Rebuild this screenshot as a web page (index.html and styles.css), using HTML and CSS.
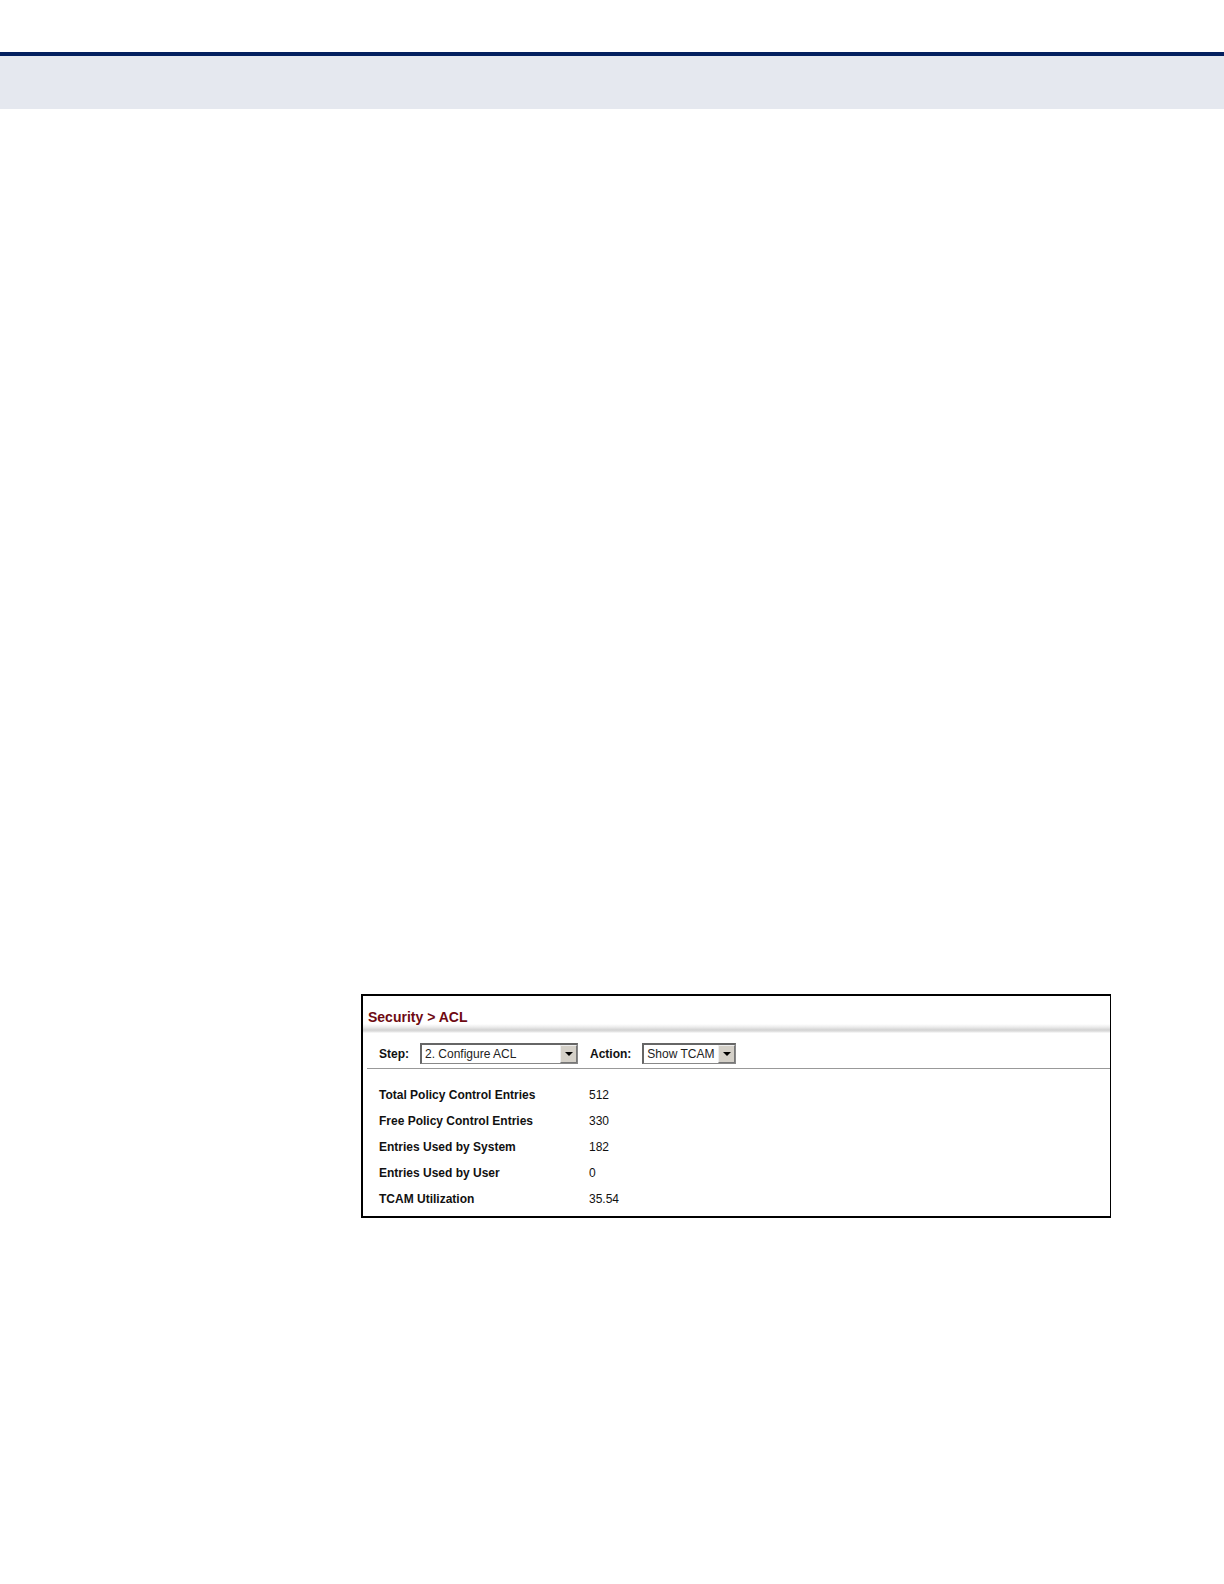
FILE: index.html
```html
<!DOCTYPE html>
<html lang="en">

<head>
    <meta charset="UTF-8">
    <meta name="viewport" content="width=device-width, initial-scale=1.0">
    <title>Security &gt; ACL</title>
    <link rel="stylesheet" href="styles.css">
</head>

<body>
    <header class="page-header"></header>

    <main class="page-content">
        <section class="panel">
            <h1 class="panel-title">Security &gt; ACL</h1>

            <form class="toolbar">
                <label for="step">Step:</label>
                <div class="select-box step-box">
                    <select id="step">
                        <option>2. Configure ACL</option>
                    </select>
                    <span class="arrow"><svg viewBox="0 0 8 4"><path d="M0 0h8L4 4z" /></svg></span>
                </div>
                <label for="action">Action:</label>
                <div class="select-box action-box">
                    <select id="action">
                        <option>Show TCAM</option>
                    </select>
                    <span class="arrow"><svg viewBox="0 0 8 4"><path d="M0 0h8L4 4z" /></svg></span>
                </div>
            </form>

            <table class="entries">
                <tr>
                    <th scope="row">Total Policy Control Entries</th>
                    <td>512</td>
                </tr>
                <tr>
                    <th scope="row">Free Policy Control Entries</th>
                    <td>330</td>
                </tr>
                <tr>
                    <th scope="row">Entries Used by System</th>
                    <td>182</td>
                </tr>
                <tr>
                    <th scope="row">Entries Used by User</th>
                    <td>0</td>
                </tr>
                <tr>
                    <th scope="row">TCAM Utilization</th>
                    <td>35.54</td>
                </tr>
            </table>
        </section>
    </main>
</body>

</html>
```
FILE: styles.css
```css
* {
    box-sizing: border-box;
}

body {
    margin: 0;
    background-color: #fff;
    color: #111;
    font-family: "Liberation Sans", Arial, sans-serif;
    font-size: 12px;
}

.page-header {
    height: 57px;
    margin-top: 52px;
    border-top: 4px solid #03205f;
    background-color: #e5e8ef;
}

.page-content {
    padding: 885px 113px 40px 361px;
}

.panel {
    border: 2px solid #000;
    border-right-width: 1px;
    padding-bottom: 4px;
}

.panel-title {
    margin: 0;
    padding: 12px 5px 0;
    height: 38px;
    color: #6e0a12;
    font-size: 14px;
    line-height: 18px;
    /* soft grey bar under the title */
    background: linear-gradient(#fff, #ececec 3px, #d2d2d2 6px, #e8e8e8 8px, #fff) 0 28px / 100% 9px no-repeat;
}

/* Step / Action row */
.toolbar {
    display: flex;
    align-items: center;
    height: 35px;
    margin-left: 4px;
    padding: 5px 0 0 12px;
    border-bottom: 1px solid #999;
}

.toolbar label {
    font-weight: bold;
}

.select-box {
    position: relative;
    height: 21px;
    margin: 0 12px 0 11px;
}

.step-box {
    width: 158px;
}

.action-box {
    width: 94px;
}

.select-box select {
    appearance: none;
    width: 100%;
    height: 100%;
    padding: 0 18px 0 3px;
    border: 1px solid #888;
    border-top: 2px solid #666;
    border-left: 2px solid #666;
    border-radius: 0;
    background-color: #fff;
    color: #222;
    font: inherit;
}

.arrow {
    position: absolute;
    top: 2px;
    right: 1px;
    bottom: 1px;
    width: 17px;
    display: flex;
    align-items: center;
    justify-content: center;
    border: 1px solid #777;
    border-top-color: #eee;
    border-left-color: #eee;
    background-color: #d4d0c8;
    pointer-events: none;
}

.arrow svg {
    width: 8px;
    height: 4px;
}

.entries {
    width: 100%;
    margin-top: 13px;
    border-collapse: collapse;
    table-layout: fixed;
}

.entries th,
.entries td {
    height: 26px;
    padding: 0;
    text-align: left;
}

.entries th {
    width: 226px;
    padding-left: 16px;
}
```
